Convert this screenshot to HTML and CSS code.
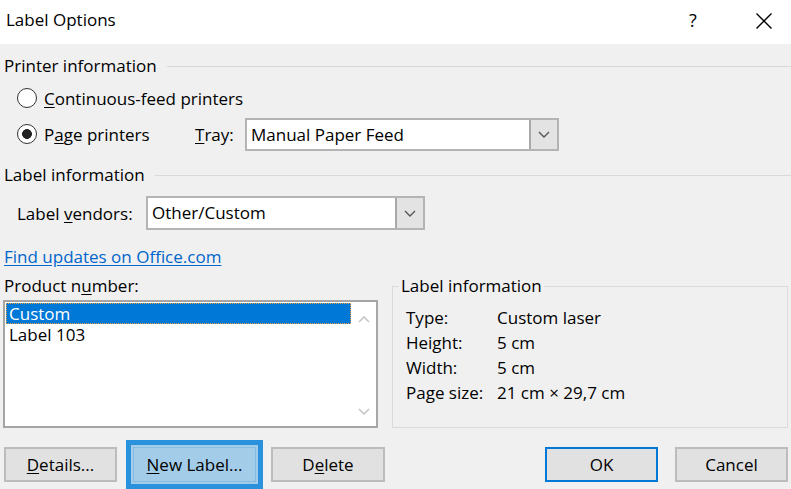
FILE: index.html
```html
<!DOCTYPE html>
<html>
<head>
<meta charset="utf-8">
<link rel="stylesheet" href="styles.css">
</head>
<body>
<div class="titlebar">
  <span class="title">Label Options</span>
  <span class="help">?</span>
  <svg class="close" width="16" height="16" viewBox="0 0 16 16"><path d="M0.5 0.5 L15.5 15.5 M15.5 0.5 L0.5 15.5" stroke="#000" stroke-width="1.4" fill="none"/></svg>
</div>
<div class="content">
  <div class="section-head first"><span>Printer information</span><i class="rule"></i></div>
  <div class="radio-row r1">
    <span class="radio"></span>
    <span class="radio-label"><u>C</u>ontinuous-feed printers</span>
  </div>
  <div class="radio-row r2">
    <span class="radio checked"></span>
    <span class="radio-label fixed">P<u>a</u>ge printers</span>
    <span class="tray-label"><u>T</u>ray:</span>
    <div class="combo tray">
      <span class="combo-text">Manual Paper Feed</span>
      <span class="combo-btn"><svg width="12" height="7" viewBox="0 0 12 7"><path d="M1 1 L6 6 L11 1" stroke="#555" stroke-width="1.4" fill="none"/></svg></span>
    </div>
  </div>
  <div class="section-head second"><span>Label information</span><i class="rule"></i></div>
  <div class="vendor-row">
    <span class="vendor-label">Label <u>v</u>endors:</span>
    <div class="combo vendor">
      <span class="combo-text">Other/Custom</span>
      <span class="combo-btn"><svg width="12" height="7" viewBox="0 0 12 7"><path d="M1 1 L6 6 L11 1" stroke="#555" stroke-width="1.4" fill="none"/></svg></span>
    </div>
  </div>
  <a class="link">Find updates on Office.com</a>
  <div class="lower">
    <div class="product">
      <div class="product-label">Product n<u>u</u>mber:</div>
      <div class="listbox">
        <div class="items">
          <div class="item selected">Custom</div>
          <div class="item">Label 103</div>
        </div>
        <div class="scroll">
          <svg width="12" height="7" viewBox="0 0 12 7"><path d="M1 6 L6 1 L11 6" stroke="#c6c6c6" stroke-width="1.6" fill="none"/></svg>
          <svg width="12" height="7" viewBox="0 0 12 7"><path d="M1 1 L6 6 L11 1" stroke="#c6c6c6" stroke-width="1.6" fill="none"/></svg>
        </div>
      </div>
    </div>
    <fieldset class="info">
      <legend>Label information</legend>
      <div class="info-grid">
        <span>Type:</span><span>Custom laser</span>
        <span>Height:</span><span>5 cm</span>
        <span>Width:</span><span>5 cm</span>
        <span>Page size:</span><span>21 cm × 29,7 cm</span>
      </div>
    </fieldset>
  </div>
  <div class="buttons">
    <button class="btn details"><u>D</u>etails...</button>
    <button class="btn newlabel"><u>N</u>ew Label...</button>
    <button class="btn delete">D<u>e</u>lete</button>
    <span class="spacer"></span>
    <button class="btn ok">OK</button>
    <button class="btn cancel">Cancel</button>
  </div>
</div>
</body>
</html>
```
FILE: styles.css
```css
html, body {
  margin: 0;
  padding: 0;
}
body {
  width: 791px;
  height: 489px;
  overflow: hidden;
  background: #f0f0f0;
  font-family: "Open Sans", "Noto Sans", sans-serif;
  font-size: 17px;
  color: #000;
}
u {
  text-decoration: underline;
  text-underline-offset: 2px;
}
.titlebar {
  height: 44px;
  background: #fff;
  display: flex;
  align-items: flex-start;
  padding: 10px 19px 0 6px;
  box-sizing: border-box;
}
.title {
  flex: 1;
  line-height: 20px;
}
.help {
  width: 20px;
  text-align: center;
  line-height: 20px;
  font-size: 18px;
  margin-right: 53px;
}
.close {
  margin-top: 3px;
}
.content {
  padding: 0 3px;
}
.section-head {
  display: flex;
  align-items: center;
  height: 20px;
  line-height: 20px;
  padding-left: 1px;
}
.section-head.first {
  margin-top: 12px;
}
.section-head.second {
  margin-top: 14px;
}
.rule {
  flex: 1;
  height: 1px;
  background: #d9d9d9;
  margin-left: 10px;
  margin-right: -3px;
}
.radio-row {
  display: flex;
  align-items: center;
  padding-left: 14px;
}
.radio-row.r1 {
  height: 32px;
  margin-top: 6px;
}
.radio-row.r2 {
  height: 34px;
  margin-top: 3px;
}
.radio {
  width: 20px;
  height: 20px;
  box-sizing: border-box;
  border: 1.5px solid #333;
  border-radius: 50%;
  background: #fff;
  margin-right: 7px;
}
.radio.checked {
  background: radial-gradient(circle, #222 0 4.6px, #fff 5.2px);
}
.radio-label.fixed {
  width: 151px;
}
.tray-label {
  width: 50px;
}
.combo {
  display: flex;
  height: 33px;
  box-sizing: border-box;
  border: 2px solid #b4b4b4;
  background: #fff;
}
.combo.tray {
  width: 314px;
}
.combo-text {
  flex: 1;
  padding-left: 4px;
  line-height: 29px;
}
.combo-btn {
  width: 26px;
  background: #e3e3e3;
  border-left: 2px solid #a9a9a9;
  display: flex;
  align-items: center;
  justify-content: center;
}
.vendor-row {
  display: flex;
  align-items: center;
  height: 34px;
  margin-top: 11px;
  padding-left: 14px;
}
.vendor-label {
  width: 129px;
}
.combo.vendor {
  width: 279px;
  height: 34px;
}
.combo.vendor .combo-text {
  line-height: 30px;
}
.link {
  display: block;
  margin-top: 17px;
  line-height: 20px;
  color: #0066cc;
  text-decoration: underline;
  text-underline-offset: 2px;
  padding-left: 1px;
}
.lower {
  display: flex;
  margin-top: 9px;
  gap: 14px;
}
.product {
  width: 375px;
}
.product-label {
  line-height: 20px;
  padding-left: 1px;
}
.listbox {
  margin-top: 4px;
  height: 128px;
  box-sizing: border-box;
  border: 2px solid #a6a6a6;
  background: #fff;
  display: flex;
  padding: 1px 0 1px 1px;
}
.items {
  flex: 1;
}
.item {
  height: 21px;
  line-height: 21px;
  padding-left: 3px;
}
.item.selected {
  background: #0078d7;
  color: #fff;
  outline: 1px dotted #f0a040;
  outline-offset: -1px;
}
.scroll {
  width: 25px;
  display: flex;
  flex-direction: column;
  justify-content: space-between;
  align-items: center;
  padding: 13px 0 10px;
}
.info {
  width: 396px;
  box-sizing: border-box;
  margin: 0;
  padding: 9px 0 19px 0;
  border: 1px solid #dadada;
}
.info legend {
  margin-left: 6px;
  padding: 0 2px;
  line-height: 20px;
}
.info-grid {
  display: grid;
  grid-template-columns: 91px auto;
  grid-auto-rows: 25px;
  align-items: center;
  margin-left: 13px;
}
.buttons {
  display: flex;
  margin-top: 19px;
  padding-left: 1px;
}
.spacer {
  flex: 1;
}
.btn {
  height: 35px;
  box-sizing: border-box;
  border: 2px solid #bcbcbc;
  background: #e1e1e1;
  font-family: inherit;
  font-size: 17px;
  color: #000;
  padding: 0;
  width: 113px;
}
.btn.newlabel {
  width: 123px;
  margin-left: 16px;
  background: #a3cce8;
  border: 1px solid #86bae0;
  box-shadow: 0 0 0 2px #a3cce8, 0 0 0 7px #2a92dc;
}
.btn.delete {
  width: 114px;
  margin-left: 15px;
}
.btn.ok {
  border-color: #0078d7;
}
.btn.cancel {
  margin-left: 17px;
}
```
